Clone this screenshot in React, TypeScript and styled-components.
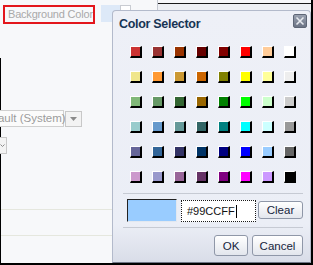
import React from "react";
import styled, {createGlobalStyle} from "styled-components";

const GlobalStyle = createGlobalStyle`
  html, body {
    margin: 0;
    padding: 0;
    background: #ffffff;
  }
  body {
    font-family: "Liberation Sans", Arial, sans-serif;
    font-size: 11px;
  }
`

const Frame = styled.div`
  position: relative;
  width: 313px;
  height: 265px;
  box-sizing: border-box;
  overflow: hidden;
  background: #f7f8fa;
  border-right: 2px solid #000;
  border-bottom: 2px solid #000;
  display: flex;
  flex-direction: column;
`

const TopStrip = styled.div`
  display: flex;
  height: 58px;
  flex-shrink: 0;
`

const LabelBox = styled.div`
  margin: 5px 0 0 3px;
  width: 92px;
  height: 19px;
  box-sizing: border-box;
  border: 2px solid #e3161c;
  color: #a9a9a9;
  font-size: 11px;
  letter-spacing: -0.2px;
  line-height: 15px;
  padding-left: 3px;
  white-space: nowrap;
`

const BlueBlock = styled.div`
  margin: 5px 0 0 6px;
  width: 19px;
  height: 17px;
  background: #dde9f8;
`

const MiniBox = styled.div`
  margin-top: 5px;
  width: 11px;
  height: 8px;
  box-sizing: border-box;
  border: 1px solid #c9ccd2;
  border-bottom: none;
  background: #fff;
`

const TopRight = styled.div`
  flex: 1;
  display: flex;
  margin-left: 26px;
`

const VLine = styled.div`
  width: 1px;
  height: 10px;
  background: #c4c8d0;
`

const TopRule = styled.div`
  flex: 1;
  height: 7px;
  border-top: 1px solid #1a1a1a;
  margin-top: 3px;
  background: #eef0f4;
`

const Lower = styled.div`
  flex: 1;
  border-left: 1px solid #000;
  display: flex;
  flex-direction: column;
`

const SelectRow = styled.div`
  display: flex;
  margin-top: 52px;
  gap: 1px;
`

const SelectBox = styled.div`
  margin-left: -25px;
  width: 88px;
  height: 17px;
  box-sizing: border-box;
  border: 1px solid #d0d0d0;
  background: #fbfbfb;
  color: #9c9c9c;
  font-size: 11.5px;
  line-height: 15px;
  padding-left: 3px;
  white-space: nowrap;
`

const DropBtn = styled.div`
  width: 17px;
  height: 16px;
  margin-top: 1px;
  box-sizing: border-box;
  border: 1px solid #c8c8c8;
  background: #f3f3f3;
  display: flex;
  align-items: center;
  justify-content: center;
`

const SmallBtn = styled.div`
  margin: 10px 0 0 -12px;
  width: 18px;
  height: 17px;
  box-sizing: border-box;
  border: 1px solid #c8c8c8;
  background: #f3f3f3;
  display: flex;
  align-items: center;
  justify-content: flex-end;
  padding-right: 1px;
`

const HRule = styled.div<{ $top: number }>`
  margin-top: ${p => p.$top}px;
  width: 112px;
  height: 1px;
  background: #e5e7de;
`

const Dialog = styled.div`
  position: absolute;
  left: 112px;
  top: 10px;
  width: 199px;
  height: 253px;
  box-sizing: border-box;
  border: 1px solid #b3bacb;
  border-bottom-color: #6f7686;
  border-radius: 4px 4px 0 0;
  background: linear-gradient(to bottom, #eef0f7 0%, #ebeef6 85%, #d9dde8 100%);
  display: flex;
  flex-direction: column;
`

const Header = styled.div`
  display: flex;
  align-items: flex-start;
  justify-content: space-between;
  padding: 5px 3px 0 6px;
  height: 30px;
  box-sizing: border-box;
`

const Title = styled.div`
  font-weight: bold;
  font-size: 12.5px;
  letter-spacing: -0.3px;
  color: #173454;
  padding-top: 1px;
`

const CloseBtn = styled.div`
  width: 14px;
  height: 14px;
  margin-top: -2px;
  box-sizing: border-box;
  border: 1px solid #5e6676;
  border-radius: 2px;
  background: linear-gradient(to bottom, #9aa1b0, #6c7485);
  display: flex;
  align-items: center;
  justify-content: center;
`

const Grid = styled.div`
  display: grid;
  grid-template-columns: repeat(8, 12px);
  column-gap: 10px;
  row-gap: 13px;
  padding: 5px 0 0 17px;
`

const Swatch = styled.div<{ $color: string }>`
  width: 12px;
  height: 12px;
  box-sizing: border-box;
  background: ${p => p.$color};
  border-top: 1px solid #fff;
  border-left: 1px solid #fff;
  border-right: 2px solid #000;
  border-bottom: 2px solid #000;
`

const Separator = styled.div<{ $top: number }>`
  margin: ${p => p.$top}px 0 0 10px;
  width: 180px;
  height: 1px;
  background: #c6cad3;
`

const InputRow = styled.div`
  display: flex;
  align-items: flex-start;
  padding: 5px 0 0 14px;
`

const Preview = styled.div<{ $color: string }>`
  width: 50px;
  height: 23px;
  box-sizing: border-box;
  background: ${p => p.$color};
  border: 1px solid #e2e8f0;
  border-top-color: #222;
  border-left-color: #222;
`

const HexInput = styled.div`
  margin-left: 4px;
  margin-top: 1px;
  width: 75px;
  height: 22px;
  box-sizing: border-box;
  border: 1px dotted #1a1a1a;
  background: #fff;
  color: #111;
  font-size: 11px;
  line-height: 20px;
  padding-left: 5px;
  display: flex;
  align-items: center;
`

const Caret = styled.span`
  display: inline-block;
  width: 1px;
  height: 13px;
  margin-left: 1px;
  background: #000;
`

const ClearWrap = styled.div`
  margin: 2px 0 0 2px;
`

const Button = styled.div<{ $w: number; $h: number }>`
  width: ${p => p.$w}px;
  height: ${p => p.$h}px;
  box-sizing: border-box;
  border: 1px solid #8f97a8;
  border-radius: 3px;
  background: linear-gradient(to bottom, #ffffff, #e3e6ed);
  color: #16243c;
  font-size: 11.5px;
  display: flex;
  align-items: center;
  justify-content: center;
`

const Footer = styled.div`
  display: flex;
  justify-content: flex-end;
  gap: 4px;
  padding: 7px 7px 0 0;
`

const colors = [
    ["#cc3333", "#993333", "#993300", "#660000", "#800000", "#ff0000", "#ffcc99", "#ffffff"],
    ["#f0e68c", "#ff9933", "#cc9933", "#cc6600", "#808000", "#ffff00", "#ffff99", "#eeeeee"],
    ["#80b878", "#669966", "#336633", "#996600", "#008000", "#00ff00", "#ccffcc", "#cccccc"],
    ["#99cccc", "#6699cc", "#669999", "#336666", "#008080", "#00ffff", "#ccffff", "#999999"],
    ["#666699", "#336699", "#333366", "#003366", "#000080", "#0000ff", "#99ccff", "#666666"],
    ["#cc99cc", "#9999cc", "#996699", "#663366", "#800080", "#ff00ff", "#cc99ff", "#000000"],
];

const App = () => {
    const selected = "#99CCFF";

    return (
        <Frame>
            <GlobalStyle/>
            <TopStrip>
                <LabelBox>Background Color</LabelBox>
                <BlueBlock/>
                <MiniBox/>
                <TopRight>
                    <VLine/>
                    <TopRule/>
                </TopRight>
            </TopStrip>
            <Lower>
                <SelectRow>
                    <SelectBox>Default (System)</SelectBox>
                    <DropBtn>
                        <svg width="7" height="4" viewBox="0 0 7 4">
                            <path d="M0 0 H7 L3.5 4 Z" fill="#8a8a8a"/>
                        </svg>
                    </DropBtn>
                </SelectRow>
                <SmallBtn>
                    <svg width="5" height="5" viewBox="0 0 5 5">
                        <path d="M0.5 1.5 L2.5 3.5 L4.5 1.5" stroke="#8a8a8a" fill="none"/>
                    </svg>
                </SmallBtn>
                <HRule $top={55}/>
                <HRule $top={25}/>
            </Lower>

            <Dialog>
                <Header>
                    <Title>Color Selector</Title>
                    <CloseBtn>
                        <svg width="10" height="10" viewBox="0 0 10 10">
                            <path d="M1.5 1.5 L8.5 8.5 M8.5 1.5 L1.5 8.5" stroke="#e8ebf0" strokeWidth="1.6"/>
                        </svg>
                    </CloseBtn>
                </Header>
                <Grid>
                    {colors.flat().map((c, i) => <Swatch key={i} $color={c}/>)}
                </Grid>
                <Separator $top={10}/>
                <InputRow>
                    <Preview $color={selected}/>
                    <HexInput>{selected}<Caret/></HexInput>
                    <ClearWrap>
                        <Button $w={45} $h={18}>Clear</Button>
                    </ClearWrap>
                </InputRow>
                <Separator $top={5}/>
                <Footer>
                    <Button $w={34} $h={21}>OK</Button>
                    <Button $w={51} $h={21}>Cancel</Button>
                </Footer>
            </Dialog>
        </Frame>
    );
};

export default App;
